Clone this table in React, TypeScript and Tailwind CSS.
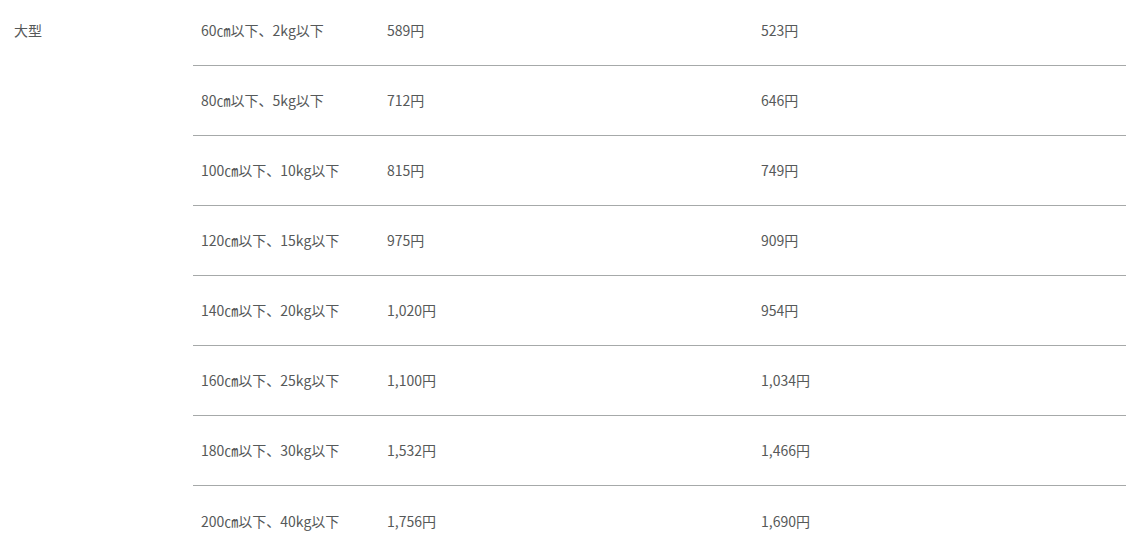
import React from "react";

const rows = [
  ["60㎝以下、2kg以下", "589円", "523円"],
  ["80㎝以下、5kg以下", "712円", "646円"],
  ["100㎝以下、10kg以下", "815円", "749円"],
  ["120㎝以下、15kg以下", "975円", "909円"],
  ["140㎝以下、20kg以下", "1,020円", "954円"],
  ["160㎝以下、25kg以下", "1,100円", "1,034円"],
  ["180㎝以下、30kg以下", "1,532円", "1,466円"],
  ["200㎝以下、40kg以下", "1,756円", "1,690円"],
];

export default function App() {
  return (
    <div
      className="w-[1128px] h-[552px] overflow-hidden bg-white text-[14px] text-[#565959]"
      style={{ fontFamily: '"Noto Sans CJK JP", "Noto Sans", sans-serif' }}
    >
      <div className="flex mt-[-4px]">
        <div className="w-[193px] shrink-0 h-[69px] flex items-center pl-[14px]">大型</div>
        <div className="w-[933px] flex flex-col">
          {rows.map((r, i) => (
            <div
              key={i}
              className={`grid grid-cols-[186px_374px_373px] h-[70px] items-center ${
                i < rows.length - 1 ? "border-b border-[#a6a9a9]" : ""
              }`}
            >
              <div className="pl-[8px]">{r[0]}</div>
              <div className="pl-[8px]">{r[1]}</div>
              <div className="pl-[8px]">{r[2]}</div>
            </div>
          ))}
        </div>
      </div>
    </div>
  );
}
